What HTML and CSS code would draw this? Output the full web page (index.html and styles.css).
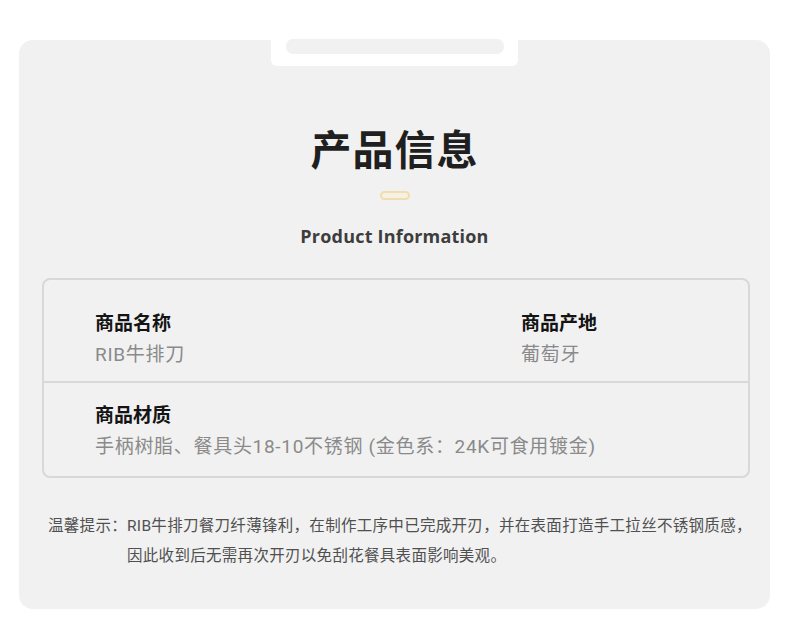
FILE: index.html
```html
<!DOCTYPE html>
<html lang="zh">
<head>
<meta charset="utf-8">
<link rel="stylesheet" href="styles.css">
</head>
<body>
<div class="card">
  <div class="tab"><div class="pill"></div></div>
  <h1 class="title">产品信息</h1>
  <div class="mark"></div>
  <div class="subtitle">Product Information</div>
  <div class="table">
    <div class="row row-first">
      <div class="cell cell-a">
        <div class="label">商品名称</div>
        <div class="value">RIB牛排刀</div>
      </div>
      <div class="cell cell-b">
        <div class="label">商品产地</div>
        <div class="value">葡萄牙</div>
      </div>
    </div>
    <div class="row row-second">
      <div class="cell cell-a">
        <div class="label">商品材质</div>
        <div class="value">手柄树脂、餐具头18-10不锈钢 (金色系：24K可食用镀金)</div>
      </div>
    </div>
  </div>
  <div class="note">
    <span class="note-label">温馨提示：</span>
    <span class="note-text">RIB牛排刀餐刀纤薄锋利，在制作工序中已完成开刃，并在表面打造手工拉丝不锈钢质感，<br>因此收到后无需再次开刃以免刮花餐具表面影响美观。</span>
  </div>
</div>
</body>
</html>
```

FILE: styles.css
```css
* { box-sizing: border-box; margin: 0; padding: 0; }
html, body { background: #ffffff; }
body {
  width: 790px;
  height: 626px;
  overflow: hidden;
  font-family: "Noto Sans CJK SC", "Noto Sans", sans-serif;
}
.card {
  position: relative;
  margin: 40px 0 0 19px;
  width: 751px;
  height: 569px;
  background: #f1f1f1;
  border-radius: 14px;
  padding-top: 81px;
  display: flex;
  flex-direction: column;
  align-items: center;
}
.tab {
  position: absolute;
  top: 0;
  left: 252px;
  width: 247px;
  height: 26px;
  background: #ffffff;
  border-radius: 0 0 6px 6px;
  display: flex;
  justify-content: center;
}
.pill {
  width: 218px;
  height: 15px;
  margin-top: -1px;
  background: #f1f1f1;
  border-radius: 7px;
}
.title {
  font-size: 41px;
  font-weight: 700;
  color: #1f1f1f;
  line-height: 52px;
  letter-spacing: 1px;
}
.mark {
  margin-top: 18px;
  width: 30px;
  height: 9px;
  border: 2px solid #f0ddb0;
  border-radius: 5px;
  background: #f7f1e4;
}
.subtitle {
  margin-top: 25px;
  font-family: "Open Sans", "Noto Sans", sans-serif;
  font-weight: 700;
  font-size: 18px;
  letter-spacing: 0.2px;
  color: #3d3d3d;
  line-height: 22px;
}
.table {
  align-self: flex-start;
  margin: 31px 0 0 23px;
  width: 708px;
  border: 2px solid #d8d8d8;
  border-radius: 8px;
}
.row {
  display: flex;
}
.row-first {
  height: 103px;
  padding-top: 29px;
  border-bottom: 2px solid #d8d8d8;
}
.row-second {
  height: 93px;
  padding-top: 18px;
}
.cell-a { padding-left: 51px; width: 477px; }
.label {
  font-size: 19px;
  font-weight: 700;
  color: #141414;
  line-height: 26px;
}
.value {
  margin-top: 7px;
  font-family: "Roboto", "Noto Sans CJK SC", sans-serif;
  font-size: 19px;
  letter-spacing: 0.7px;
  color: #8a8a8a;
  line-height: 26px;
  white-space: nowrap;
}
.note {
  align-self: flex-start;
  margin: 33px 0 0 29px;
  display: flex;
  font-family: "Roboto", "Noto Sans CJK SC", sans-serif;
  font-size: 15.5px;
  letter-spacing: 0.3px;
  line-height: 30px;
  color: #505050;
}
.note-label { flex: none; }
.note-text { width: 640px; white-space: nowrap; }
```
